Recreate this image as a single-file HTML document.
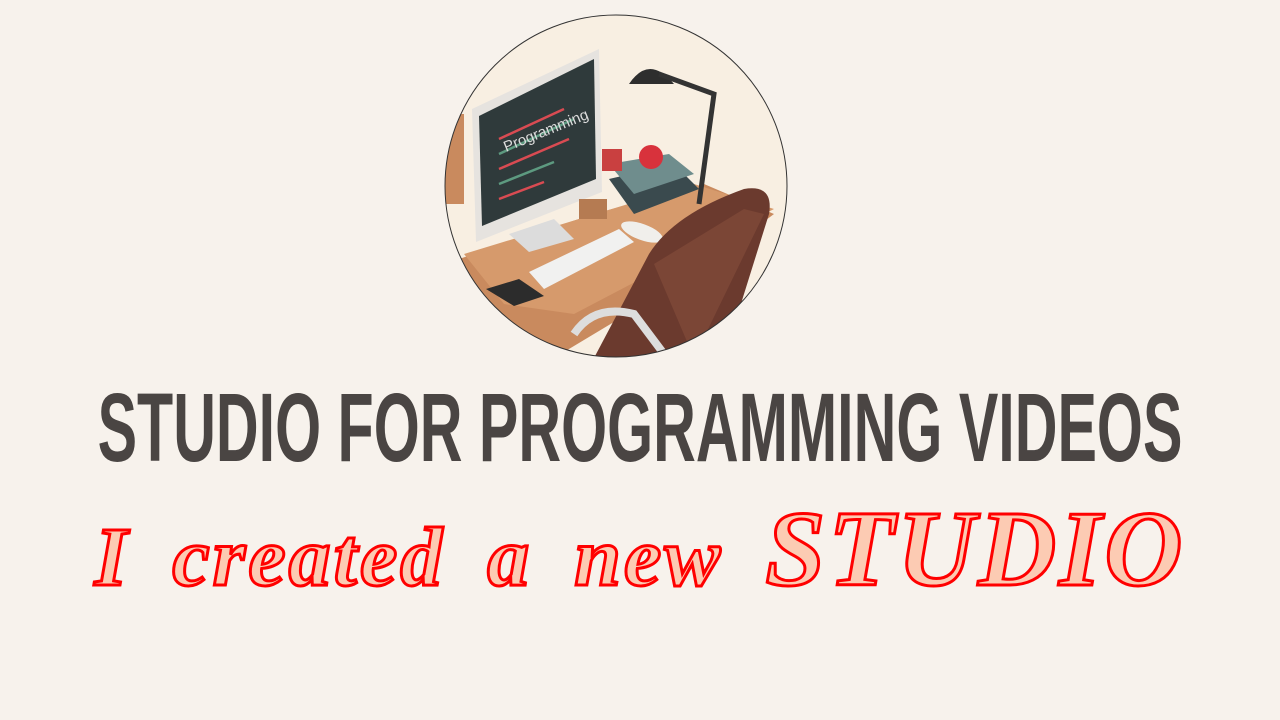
<!DOCTYPE html>
<html><head><meta charset="utf-8"><style>
html,body{margin:0;padding:0;width:1280px;height:720px;background:#f7f2ec;overflow:hidden}
.t{position:absolute;left:640px;top:378px;font-family:"Liberation Sans",sans-serif;font-weight:bold;font-size:97px;line-height:100px;color:#4a4543;white-space:nowrap;transform:translateX(-50%) scaleX(0.61);transform-origin:center}
.s{position:absolute;left:0;top:500px;width:1280px;text-align:center;font-family:"Liberation Serif",serif;font-style:italic;font-weight:bold;font-size:84px;line-height:100px;color:#fccbb3;-webkit-text-stroke:3px #f00;letter-spacing:3px;word-spacing:18px;white-space:nowrap}
.s b{font-size:108px}
</style></head><body>
<svg style="position:absolute;left:444px;top:14px" width="344" height="344" viewBox="0 0 344 344">
<defs><clipPath id="c"><circle cx="172" cy="172" r="171"/></clipPath></defs>
<g clip-path="url(#c)">
<rect width="344" height="344" fill="#f8efe2"/>
<polygon points="0,250 0,300 110,344 250,260 330,200 260,170 150,200" fill="#c98a5e"/>
<polygon points="20,240 250,170 330,195 130,300 60,290" fill="#d69a6c"/>
<rect x="0" y="100" width="20" height="90" fill="#c98a5e"/>
<polygon points="28,95 155,35 158,178 32,228" fill="#e6e3df"/>
<polygon points="35,102 150,45 152,165 38,212" fill="#2f3a3b"/>
<g stroke-width="2.5"><line x1="55" y1="125" x2="120" y2="95" stroke="#d94b52"/><line x1="55" y1="140" x2="130" y2="105" stroke="#5d9a80"/><line x1="55" y1="155" x2="125" y2="125" stroke="#d94b52"/><line x1="55" y1="170" x2="110" y2="148" stroke="#5d9a80"/><line x1="55" y1="185" x2="100" y2="168" stroke="#d94b52"/></g>
<text x="62" y="138" font-family="Liberation Sans" font-size="15" fill="#ddd" transform="rotate(-22 62 138)">Programming</text>
<polygon points="65,220 110,205 130,225 85,238" fill="#dcdcdc"/>
<polygon points="85,258 175,215 190,228 100,275" fill="#f1f1f0"/>
<ellipse cx="198" cy="218" rx="22" ry="8" fill="#f0efeb" transform="rotate(20 198 218)"/>
<polygon points="42,275 75,265 100,282 70,292" fill="#2c2c2c"/>
<polygon points="165,165 230,150 255,175 190,200" fill="#3a4a4e"/>
<polygon points="165,150 225,140 250,160 190,180" fill="#6f8d8d"/>
<circle cx="207" cy="143" r="12" fill="#d8323c"/>
<rect x="158" y="135" width="20" height="22" fill="#c94040"/>
<path d="M185,70 q20,-30 45,0 z" fill="#2e2e2e"/>
<path d="M215,60 l55,20 l-15,110" stroke="#333" stroke-width="5" fill="none"/>
<rect x="135" y="185" width="28" height="20" fill="#b57b52"/>
<path d="M150,344 L205,240 Q230,200 300,175 Q330,170 325,200 L280,344 Z" fill="#6b3a2e"/>
<path d="M210,250 L300,195 L320,200 L250,344" fill="#7b4636"/>
<path d="M130,320 q20,-30 60,-20 l30,40" stroke="#ddd" stroke-width="8" fill="none"/>
</g>
<circle cx="172" cy="172" r="171" fill="none" stroke="#333" stroke-width="1"/>
</svg>
<div class="t">STUDIO FOR PROGRAMMING VIDEOS</div>
<div class="s">I created a new <b>STUDIO</b></div>
</body></html>
